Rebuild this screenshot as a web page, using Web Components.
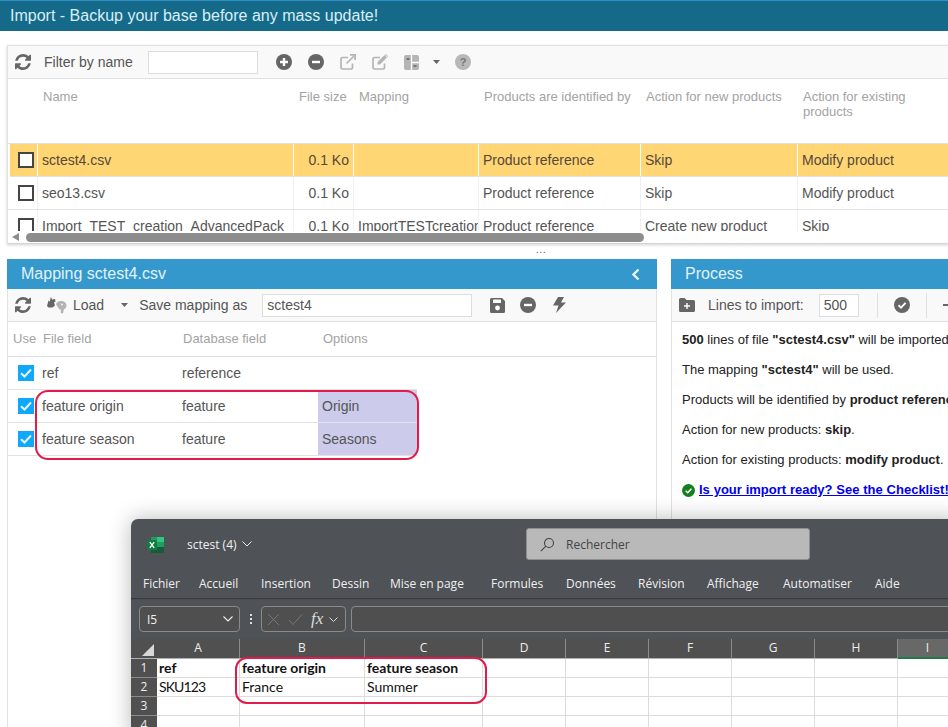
<!DOCTYPE html>
<html lang="en">
<head>
<meta charset="utf-8">
<title>Import</title>
<style>
html, body { margin: 0; padding: 0; }
body {
    width: 948px;
    height: 727px;
    overflow: hidden;
    position: relative;
    background: #fff;
    font-family: "Liberation Sans", Arial, sans-serif;
    font-size: 14px;
}
.bottom { display: flex; gap: 14px; padding-left: 7px; }
</style>
</head>
<body>
<app-titlebar>Import - Backup your base before any mass update!</app-titlebar>
<files-panel></files-panel>
<app-splitter></app-splitter>
<div class="bottom">
    <app-panel heading="Mapping sctest4.csv" width="650" collapsible>
        <mapping-toolbar slot="toolbar"></mapping-toolbar>
        <mapping-table></mapping-table>
    </app-panel>
    <app-panel heading="Process" width="290">
        <process-toolbar slot="toolbar"></process-toolbar>
        <process-summary></process-summary>
    </app-panel>
</div>
<excel-window></excel-window>

<script>
// Shared FontAwesome style icons
const ICONS = {
    refresh: (c, s = 16) => `<svg width="${s}" height="${s}" viewBox="128 128 1536 1536" fill="${c}"><path d="M1639 1056q0 5-1 7-64 268-268 434.5t-478 166.5q-146 0-282.5-55t-243.5-157l-129 129q-19 19-45 19t-45-19-19-45v-448q0-26 19-45t45-19h448q26 0 45 19t19 45-19 45l-137 137q71 66 161 102t187 36q134 0 250-65t186-179q11-17 53-117 8-23 30-23h192q13 0 22.5 9.5t9.5 22.5zm25-800v448q0 26-19 45t-45 19h-448q-26 0-45-19t-19-45 19-45l138-138q-148-137-349-137-134 0-250 65t-186 179q-11 17-53 117-8 23-30 23h-199q-13 0-22.5-9.5t-9.5-22.5v-7q65-268 270-434.5t480-166.5q146 0 284 55.5t245 156.5l130-129q19-19 45-19t45 19 19 45z"/></svg>`,
    plus: (c) => `<svg width="16" height="16" viewBox="0 0 16 16"><circle cx="8" cy="8" r="8" fill="${c}"/><path d="M4 6.800h2.800V4h2.400v2.800H12v2.400H9.200V12H6.800V9.200H4z" fill="#fff"/></svg>`,
    minus: (c) => `<svg width="16" height="16" viewBox="0 0 16 16"><circle cx="8" cy="8" r="8" fill="${c}"/><rect x="4" y="6.800" width="8" height="2.400" fill="#fff"/></svg>`,
    external: (c) => `<svg width="16" height="16" viewBox="0 0 16 16" fill="none" stroke="${c}" stroke-width="1.700"><path d="M12.500 9.500v4a1.500 1.500 0 0 1-1.500 1.500H2.500A1.500 1.500 0 0 1 1 13.500V5a1.500 1.500 0 0 1 1.500-1.500H8"/><path d="M6.500 9.500 15 1"/><path d="M10 .9h5.100V6" /></svg>`,
    edit: (c) => `<svg width="16" height="16" viewBox="0 0 16 16"><path d="M12.500 9.500v4a1.500 1.500 0 0 1-1.500 1.500H2.500A1.500 1.500 0 0 1 1 13.500V5a1.500 1.500 0 0 1 1.500-1.500H8" fill="none" stroke="${c}" stroke-width="1.700"/><path d="M5.500 8 12.500 1l2.500 2.500-7 7H5.500z M13 .5l.8-.5 2.200 2.200-.5.800z" fill="${c}"/></svg>`,
    columns: (c) => `<svg width="15" height="15" viewBox="0 0 15 15"><rect width="15" height="15" rx="2" fill="${c}"/><path d="M7.500 0v15M7.500 7.500h7.500" stroke="#fff" stroke-width="1.300" fill="none"/><rect x="2.500" y="3" width="3" height="2" fill="#777"/><rect x="9.500" y="10" width="3" height="2" fill="#777"/></svg>`,
    caret: (c) => `<svg width="7" height="4" viewBox="0 0 7 4"><path d="M0 0h7L3.500 4z" fill="${c}"/></svg>`,
    save: (c) => `<svg width="15" height="15" viewBox="0 0 15 15"><path d="M1.500 0H12l3 3v10.500a1.500 1.500 0 0 1-1.500 1.500h-12A1.500 1.500 0 0 1 0 13.500v-12A1.500 1.500 0 0 1 1.500 0z" fill="${c}"/><rect x="3" y="1.500" width="8" height="3.500" rx=".5" fill="#fff"/><circle cx="7.500" cy="10" r="2.400" fill="#fff"/></svg>`,
    bolt: (c) => `<svg width="13" height="16" viewBox="0 0 13 16"><path d="M5 0h6L8 5.500h5L3 16l2.500-7.500H0z" fill="${c}"/></svg>`,
    folderPlus: (c) => `<svg width="16" height="14" viewBox="0 0 16 14"><path d="M1.500 0h4L7.500 2H14.500A1.500 1.500 0 0 1 16 3.500v9a1.500 1.500 0 0 1-1.500 1.500h-13A1.500 1.500 0 0 1 0 12.500v-11A1.500 1.500 0 0 1 1.500 0z" fill="${c}"/><path d="M5 7.300h2.300V5h1.400v2.300H11v1.400H8.700V11H7.300V8.700H5z" fill="#fff"/></svg>`,
    checkCircle: (c, s = 16) => `<svg width="${s}" height="${s}" viewBox="0 0 16 16"><circle cx="8" cy="8" r="8" fill="${c}"/><path d="M4.500 8.300 7 10.700l4.600-4.900" fill="none" stroke="#fff" stroke-width="1.900"/></svg>`,
    // hand and little elephant next to "Load"
    elephant: () => `<svg width="20" height="17" viewBox="0 0 20 17"><path d="M0 9 1.500 3.500 2.800 4.800 3.800 0 5.500 2.800 8 1.800 8.500 4.500 7 5.500 8 8.500 5.500 10.500H1.500z" fill="#666"/><path d="M9 7c.8-2 2.500-3 5-3 3 0 5.500 1.600 5.500 4.500 0 2.200-1.200 3.200-2.500 3.800-.5 1-.5 2.500-1 3.700-.7.500-1.600.500-2.200 0V12.500c-1.200 0-2-.5-2.300-1.500C10.500 9.500 9.500 8.500 9 7z" fill="#b4b4b4"/><circle cx="15" cy="7.500" r="1" fill="#f4f4f4"/></svg>`
};

// Dark blue strip at the very top of the page
class AppTitlebar extends HTMLElement {
    constructor() {
        super();
        this.attachShadow({ mode: 'open' });
    }
    connectedCallback() {
        this.shadowRoot.innerHTML = `
            <style>
                :host { display: block; border-top: 1px solid #2e8fc9; }
                .bar {
                    height: 30px;
                    line-height: 29px;
                    background: #156a8a;
                    color: #d9eef6;
                    font-size: 16px;
                    padding-left: 10px;
                }
            </style>
            <div class="bar"><slot></slot></div>
        `;
    }
}

class FilesPanel extends HTMLElement {
    constructor() {
        super();
        this.attachShadow({ mode: 'open' });
    }
    row(name, size, mapping, id, fresh, existing, selected) {
        return `
            <div class="row${selected ? ' selected' : ''}">
                <div class="cell c0"><span class="box"></span></div>
                <div class="cell c1">${name}</div>
                <div class="cell c2">${size}</div>
                <div class="cell c3">${mapping}</div>
                <div class="cell c4">${id}</div>
                <div class="cell c5">${fresh}</div>
                <div class="cell c6">${existing}</div>
            </div>`;
    }
    connectedCallback() {
        this.shadowRoot.innerHTML = `
            <style>
                :host {
                    display: block;
                    margin: 14px 0 0 7px;
                    width: 960px;
                    border: 1px solid #e2e2e2;
                    border-bottom-color: #d4d4d4;
                    box-shadow: 0 1px 3px rgba(0,0,0,.18);
                    background: #fff;
                    box-sizing: border-box;
                }
                .toolbar {
                    height: 32px;
                    background: #f9f9f9;
                    border-bottom: 1px solid #e0e0e0;
                    display: flex;
                    align-items: center;
                    padding-left: 7px;
                    color: #555;
                    font-size: 14px;
                }
                .toolbar > * { flex: none; }
                input {
                    box-sizing: border-box;
                    width: 110px;
                    height: 23px;
                    border: 1px solid #ddd;
                    background: #fff;
                    margin: 0 18px 0 15px;
                    padding: 0;
                }
                .gap { margin-left: 16px; display: flex; }
                .head {
                    height: 65px;
                    display: flex;
                    color: #a3a3a3;
                    font-size: 13px;
                    line-height: 15px;
                    border-bottom: 1px solid #e0e0e0;
                    padding-top: 10px;
                    box-sizing: border-box;
                }
                .head div { box-sizing: border-box; padding-left: 5px; flex: none; }
                .viewport { height: 87px; overflow: hidden; }
                .row {
                    height: 33px;
                    box-sizing: border-box;
                    display: flex;
                    padding-left: 2px;
                    border-bottom: 1px solid #e2e2e2;
                    color: #555;
                    font-size: 14px;
                    line-height: 32px;
                }
                .cell {
                    flex: none;
                    box-sizing: border-box;
                    padding-left: 4px;
                    border-right: 1px solid #f0f0f0;
                    overflow: hidden;
                    white-space: nowrap;
                }
                .row.selected { background: #ffd673; color: #54483a; padding-left: 0; margin-left: 2px; }
                .row.selected .cell { border-right-color: #fff; }
                .c0 { width: 28px; padding: 8px 0 0 8px; line-height: 0; }
                .c1 { width: 256px; }
                .c2 { width: 60px; text-align: right; padding-right: 4px; }
                .c3 { width: 125px; }
                .c4 { width: 162px; }
                .c5 { width: 157px; }
                .c6 { width: 160px; border-right: 0; }
                .box {
                    display: block;
                    width: 16px;
                    height: 16px;
                    box-sizing: border-box;
                    border: 2px solid #444;
                    background: #fff;
                }
                .scroll {
                    height: 12px;
                    position: relative;
                    background: #fff;
                    display: flex;
                    align-items: center;
                }
                .arrow {
                    margin-left: 4px;
                    width: 0;
                    height: 0;
                    border-top: 4px solid transparent;
                    border-bottom: 4px solid transparent;
                    border-right: 7px solid #8d8d8d;
                }
                .thumb {
                    margin-left: 7px;
                    width: 618px;
                    height: 9px;
                    border-radius: 5px;
                    background: #8d8d8d;
                }
            </style>
            <div class="toolbar">
                ${ICONS.refresh('#666')}
                <span style="margin-left:13px">Filter by name</span>
                <input type="text">
                <span class="gap" style="margin-left:0">${ICONS.plus('#666')}</span>
                <span class="gap">${ICONS.minus('#666')}</span>
                <span class="gap">${ICONS.external('#b5b5b5')}</span>
                <span class="gap">${ICONS.edit('#b5b5b5')}</span>
                <span class="gap">${ICONS.columns('#b5b5b5')}</span>
                <span class="gap" style="margin-left:14px">${ICONS.caret('#666')}</span>
                <span class="gap" style="margin-left:15px">
                    <svg width="16" height="16" viewBox="0 0 16 16"><circle cx="8" cy="8" r="8" fill="#b8b8b8"/><text x="8" y="12" text-anchor="middle" font-size="11" font-weight="700" fill="#777" font-family="Liberation Sans">?</text></svg>
                </span>
            </div>
            <div class="head">
                <div style="width:286px;padding-left:35px">Name</div>
                <div style="width:60px">File size</div>
                <div style="width:125px">Mapping</div>
                <div style="width:162px">Products are identified by</div>
                <div style="width:157px">Action for new products</div>
                <div style="width:125px">Action for existing products</div>
            </div>
            <div class="viewport">
                ${this.row('sctest4.csv', '0.1 Ko', '', 'Product reference', 'Skip', 'Modify product', true)}
                ${this.row('seo13.csv', '0.1 Ko', '', 'Product reference', 'Skip', 'Modify product')}
                ${this.row('Import_TEST_creation_AdvancedPack', '0.1 Ko', 'ImportTESTcreation', 'Product reference', 'Create new product', 'Skip')}
            </div>
            <div class="scroll"><span class="arrow"></span><span class="thumb"></span></div>
        `;
    }
}

class AppSplitter extends HTMLElement {
    constructor() {
        super();
        this.attachShadow({ mode: 'open' });
    }
    connectedCallback() {
        this.shadowRoot.innerHTML = `
            <style>
                :host {
                    display: block;
                    height: 15px;
                    text-align: center;
                    color: #666;
                    font-size: 11px;
                    line-height: 10px;
                    letter-spacing: .5px;
                    padding-left: 134px;
                    box-sizing: border-box;
                    width: 948px;
                }
            </style>
            ...
        `;
    }
}

// Blue headed panel, toolbar and content come in through slots
class AppPanel extends HTMLElement {
    constructor() {
        super();
        this.attachShadow({ mode: 'open' });
    }
    connectedCallback() {
        const chevron = this.hasAttribute('collapsible')
            ? `<svg class="chev" width="9" height="13" viewBox="0 0 9 13"><path d="M7.500 1.500 2.500 6.500l5 5" fill="none" stroke="#eaf5fb" stroke-width="2.400"/></svg>`
            : '';
        this.shadowRoot.innerHTML = `
            <style>
                :host {
                    display: block;
                    flex: none;
                    width: ${this.getAttribute('width')}px;
                    height: 468px;
                    box-sizing: border-box;
                    border-left: 1px solid #e2e2e2;
                    border-right: 1px solid #e2e2e2;
                    background: #fff;
                }
                .head {
                    height: 30px;
                    margin: 0 -1px;
                    background: #3498cc;
                    color: #e2f2fa;
                    font-size: 16px;
                    line-height: 29px;
                    padding: 0 17px 0 14px;
                    display: flex;
                    justify-content: space-between;
                    align-items: center;
                }
                .head span { display: block; height: 30px; }
                .chev { flex: none; }
                .tools { display: block; }
            </style>
            <div class="head"><span>${this.getAttribute('heading')}</span>${chevron}</div>
            <div class="tools"><slot name="toolbar"></slot></div>
            <slot></slot>
        `;
    }
}

class MappingToolbar extends HTMLElement {
    constructor() {
        super();
        this.attachShadow({ mode: 'open' });
    }
    connectedCallback() {
        this.shadowRoot.innerHTML = `
            <style>
                :host {
                    display: flex;
                    height: 33px;
                    box-sizing: border-box;
                    align-items: center;
                    background: #f9f9f9;
                    border-bottom: 1px solid #e0e0e0;
                    padding-left: 7px;
                    color: #555;
                    font-size: 14px;
                }
                span { flex: none; display: flex; }
                input {
                    box-sizing: border-box;
                    flex: none;
                    width: 210px;
                    height: 23px;
                    border: 1px solid #ddd;
                    background: #fff;
                    font: 14px "Liberation Sans", Arial, sans-serif;
                    color: #555;
                    padding: 0 4px;
                    margin: 0 18px 0 15px;
                }
            </style>
            ${ICONS.refresh('#666')}
            <span style="margin-left:16px">${ICONS.elephant()}</span>
            <span style="margin-left:6px">Load</span>
            <span style="margin-left:17px">${ICONS.caret('#666')}</span>
            <span style="margin-left:11px">Save mapping as</span>
            <input type="text" value="sctest4">
            <span>${ICONS.save('#666')}</span>
            <span style="margin-left:15px">${ICONS.minus('#666')}</span>
            <span style="margin-left:17px">${ICONS.bolt('#666')}</span>
        `;
    }
}

class MappingTable extends HTMLElement {
    constructor() {
        super();
        this.attachShadow({ mode: 'open' });
    }
    row(field, db, option) {
        return `
            <div class="row">
                <span class="check"><svg width="16" height="16" viewBox="0 0 16 16"><rect width="16" height="16" fill="#0fa8fb"/><path d="M3 8.300 6.500 11.500 13 4.500" fill="none" stroke="#e6f6ff" stroke-width="2"/></svg></span>
                <span class="f">${field}</span>
                <span class="d">${db}</span>
                <span class="o${option ? ' filled' : ''}">${option}</span>
            </div>`;
    }
    connectedCallback() {
        this.shadowRoot.innerHTML = `
            <style>
                :host { display: block; position: relative; }
                .head {
                    height: 35px;
                    box-sizing: border-box;
                    border-bottom: 1px solid #e0e0e0;
                    display: flex;
                    color: #a3a3a3;
                    font-size: 13px;
                    line-height: 34px;
                    padding-left: 5px;
                }
                .head span { flex: none; }
                .row {
                    width: 409px;
                    height: 33px;
                    box-sizing: border-box;
                    border-bottom: 1px solid #e2e2e2;
                    display: flex;
                    color: #555;
                    font-size: 14px;
                    line-height: 32px;
                }
                .check { flex: none; width: 34px; padding: 8px 0 0 10px; box-sizing: border-box; line-height: 0; }
                .f { flex: none; width: 140px; }
                .d { flex: none; width: 136px; }
                .o { flex: none; width: 99px; padding-left: 4px; box-sizing: border-box; }
                .o.filled { background: #cccbec; }
                .ring {
                    position: absolute;
                    left: 27px;
                    top: 68px;
                    width: 384px;
                    height: 70px;
                    box-sizing: border-box;
                    border: 2px solid #df1c4b;
                    border-radius: 13px;
                }
            </style>
            <div class="head">
                <span style="width:30px">Use</span>
                <span style="width:140px">File field</span>
                <span style="width:140px">Database field</span>
                <span>Options</span>
            </div>
            ${this.row('ref', 'reference', '')}
            ${this.row('feature origin', 'feature', 'Origin')}
            ${this.row('feature season', 'feature', 'Seasons')}
            <div class="ring"></div>
        `;
    }
}

class ProcessToolbar extends HTMLElement {
    constructor() {
        super();
        this.attachShadow({ mode: 'open' });
    }
    connectedCallback() {
        this.shadowRoot.innerHTML = `
            <style>
                :host {
                    display: flex;
                    height: 33px;
                    box-sizing: border-box;
                    align-items: center;
                    background: #f9f9f9;
                    border-bottom: 1px solid #e0e0e0;
                    padding-left: 7px;
                    color: #555;
                    font-size: 14px;
                }
                span { flex: none; display: flex; }
                input {
                    box-sizing: border-box;
                    flex: none;
                    width: 40px;
                    height: 23px;
                    border: 1px solid #ddd;
                    background: #fff;
                    font: 14px "Liberation Sans", Arial, sans-serif;
                    color: #555;
                    padding: 0 4px;
                    margin-left: 15px;
                }
                .sep { width: 1px; height: 25px; background: #e0e0e0; }
            </style>
            <span>${ICONS.folderPlus('#666')}</span>
            <span style="margin-left:13px">Lines to import:</span>
            <input type="text" value="500">
            <span class="sep" style="margin-left:18px"></span>
            <span style="margin-left:16px">${ICONS.checkCircle('#666')}</span>
            <span class="sep" style="margin-left:16px"></span>
            <span style="margin-left:16px;width:8px;height:2px;background:#666"></span>
        `;
    }
}

class ProcessSummary extends HTMLElement {
    constructor() {
        super();
        this.attachShadow({ mode: 'open' });
    }
    connectedCallback() {
        this.shadowRoot.innerHTML = `
            <style>
                :host {
                    display: block;
                    padding: 10px 0 0 10px;
                    color: #222;
                    font-size: 13px;
                    line-height: 16px;
                    white-space: nowrap;
                    overflow: hidden;
                }
                p { margin: 0 0 14px; }
                a { color: #0000ee; font-weight: 700; word-spacing: .2px; }
                .ok { display: flex; align-items: center; gap: 4px; }
            </style>
            <p><b>500</b> lines of file <b>"sctest4.csv"</b> will be imported.</p>
            <p>The mapping <b>"sctest4"</b> will be used.</p>
            <p>Products will be identified by <b>product reference</b>.</p>
            <p>Action for new products: <b>skip</b>.</p>
            <p>Action for existing products: <b>modify product</b>.</p>
            <p class="ok">${ICONS.checkCircle('#157f1f', 13)}<a href="#">Is your import ready? See the Checklist!</a></p>
        `;
    }
}

// Excel window lying over the page, cropped by the screenshot
class ExcelWindow extends HTMLElement {
    constructor() {
        super();
        this.attachShadow({ mode: 'open' });
    }
    connectedCallback() {
        const menu = [['Fichier', 56], ['Accueil', 62], ['Insertion', 71], ['Dessin', 58], ['Mise en page', 101], ['Formules', 75], ['Données', 72], ['Révision', 69], ['Affichage', 76], ['Automatiser', 92], ['Aide', 40]];
        const cols = [['A', 83], ['B', 125], ['C', 118], ['D', 83], ['E', 83], ['F', 83], ['G', 83], ['H', 83], ['I', 60]];
        const rows = [
            ['ref', 'feature origin', 'feature season'],
            ['<span style="letter-spacing:-.9px">SKU123</span>', 'France', 'Summer'],
            [], []
        ];
        const tpl = cols.map(c => c[1] + 'px').join(' ');
        const cell = (t, bold) => `<div class="cell${bold ? ' bold' : ''}">${t || ''}</div>`;
        this.shadowRoot.innerHTML = `
            <style>
                :host {
                    position: absolute;
                    left: 131px;
                    top: 519px;
                    width: 830px;
                    height: 220px;
                    display: block;
                    background: #4f5256;
                    border-radius: 7px 0 0 0;
                    box-shadow: 0 0 22px rgba(0,0,0,.28);
                    font-family: "Open Sans", "Noto Sans", sans-serif;
                    color: #f0f0f0;
                }
                .clip { overflow: hidden; height: 100%; border-radius: 7px 0 0 0; position: relative; }
                .title {
                    height: 46px;
                    box-sizing: border-box;
                    display: flex;
                    align-items: center;
                    padding: 4px 0 0 16px;
                    font-size: 12px;
                    position: relative;
                }
                .title .name { margin-left: 23px; display: flex; align-items: center; gap: 5px; }
                .search {
                    position: absolute;
                    left: 395px;
                    top: 9px;
                    width: 284px;
                    height: 32px;
                    box-sizing: border-box;
                    background: #b9b9b9;
                    border: 1px solid #8f8f8f;
                    border-radius: 3px;
                    color: #444;
                    display: flex;
                    align-items: center;
                    padding-left: 13px;
                    gap: 11px;
                    font-size: 12px;
                }
                .menu {
                    height: 33px;
                    box-sizing: border-box;
                    display: flex;
                    padding: 10px 0 0 12px;
                    font-size: 12px;
                    line-height: 18px;
                    box-shadow: 0 1px 1px rgba(0,0,0,.3);
                }
                .menu span { flex: none; }
                .formula {
                    height: 41px;
                    box-sizing: border-box;
                    padding: 8px 0 0 8px;
                    display: flex;
                }
                .fbox {
                    box-sizing: border-box;
                    height: 26px;
                    background: #4f4f4f;
                    border: 1px solid #8a8a8a;
                    border-radius: 4px;
                    display: flex;
                    align-items: center;
                    flex: none;
                }
                .namebox { width: 101px; padding: 0 6px 0 7px; justify-content: space-between; font-size: 12px; }
                .dots { width: 21px; flex: none; display: flex; flex-direction: column; gap: 2px; align-items: center; justify-content: center; height: 26px; }
                .dots i { width: 2px; height: 2px; background: #e0e0e0; display: block; }
                .fx { width: 85px; padding-left: 5px; gap: 8px; color: #ddd; }
                .fx b { font: italic 400 17px "Liberation Serif", serif; line-height: 20px; margin-right: -5px; }
                .input { width: 640px; margin-left: 5px; }
                .colhead {
                    display: grid;
                    grid-template-columns: 26px ${tpl};
                    height: 19px;
                    background: #505050;
                    font-size: 12px;
                    line-height: 18px;
                    text-align: center;
                    color: #eee;
                    border-bottom: 1px solid #b0b0b0;
                }
                .colhead div { border-right: 1px solid #8b8b8b; box-sizing: border-box; height: 19px; }
                .colhead .corner { position: relative; border-right: 0; }
                .colhead .corner:after {
                    content: '';
                    position: absolute;
                    right: 3px;
                    bottom: 2px;
                    border-left: 12px solid transparent;
                    border-bottom: 12px solid #d8d8d8;
                }
                .colhead .active { background: #686868; border-bottom: 2px solid #1d7a46; height: 20px; }
                .sheet { display: grid; grid-template-columns: 26px ${tpl}; background: #fff; grid-auto-rows: 19px; }
                .rowhead {
                    background: #505050;
                    color: #eee;
                    font-size: 12px;
                    line-height: 18px;
                    text-align: center;
                    border-bottom: 1px solid #8b8b8b;
                    box-sizing: border-box;
                }
                .cell {
                    box-sizing: border-box;
                    border-right: 1px solid #dcdcdc;
                    border-bottom: 1px solid #dcdcdc;
                    color: #111;
                    font-family: Lato, "Noto Sans", sans-serif;
                    font-size: 14px;
                    line-height: 18px;
                    padding-left: 2px;
                    white-space: nowrap;
                    overflow: hidden;
                }
                .cell.bold { font-weight: 700; }
                .ring {
                    position: absolute;
                    left: 104px;
                    top: 138px;
                    width: 252px;
                    height: 47px;
                    box-sizing: border-box;
                    border: 2px solid #df1c4b;
                    border-radius: 12px;
                }
            </style>
            <div class="clip">
            <div class="title">
                <svg width="17" height="17" viewBox="0 0 17 17">
                    <rect x="4" y="1" width="13" height="16" rx="1" fill="#1f9e63"/>
                    <rect x="10" y="1" width="7" height="5" fill="#33c481"/>
                    <rect x="4" y="11" width="13" height="6" fill="#185c37"/>
                    <rect x="0" y="4" width="10" height="10" rx="1" fill="#107c41"/>
                    <path d="M2.800 6.200 7.200 11.800M7.200 6.200 2.800 11.800" stroke="#fff" stroke-width="1.300"/>
                </svg>
                <span class="name">sctest (4)
                    <svg width="10" height="6" viewBox="0 0 10 6"><path d="M.5.5 5 5 9.500.5" fill="none" stroke="#eee" stroke-width="1"/></svg>
                </span>
                <div class="search">
                    <svg width="15" height="15" viewBox="0 0 15 15" fill="none" stroke="#444" stroke-width="1.100"><circle cx="9" cy="6" r="4.500"/><path d="M5.800 9.200.8 14.200"/></svg>
                    <span>Rechercher</span>
                </div>
            </div>
            <div class="menu">${menu.map(m => `<span style="width:${m[1]}px">${m[0]}</span>`).join('')}</div>
            <div class="formula">
                <div class="fbox namebox"><span>I5</span>
                    <svg width="10" height="6" viewBox="0 0 10 6"><path d="M.5.5 5 5 9.500.5" fill="none" stroke="#eee" stroke-width="1.100"/></svg>
                </div>
                <div class="dots"><i></i><i></i><i></i></div>
                <div class="fbox fx">
                    <svg width="13" height="13" viewBox="0 0 13 13"><path d="M1 1 12 12M12 1 1 12" stroke="#777" stroke-width="1"/></svg>
                    <svg width="15" height="13" viewBox="0 0 15 13"><path d="M1 7 5 11.500 14 1.500" fill="none" stroke="#777" stroke-width="1"/></svg>
                    <b>fx</b>
                    <svg style="margin-left:3px" width="9" height="5" viewBox="0 0 9 5"><path d="M.5.5 4.500 4.500 8.500.5" fill="none" stroke="#ddd" stroke-width="1"/></svg>
                </div>
                <div class="fbox input"></div>
            </div>
            <div class="colhead">
                <div class="corner"></div>
                ${cols.map(c => `<div class="${c[0] === 'I' ? 'active' : ''}">${c[0]}</div>`).join('')}
            </div>
            <div class="sheet">
                ${rows.map((r, i) => `
                    <div class="rowhead">${i + 1}</div>
                    ${cols.map((c, j) => cell(r[j], i === 0)).join('')}
                `).join('')}
            </div>
            <div class="ring"></div>
            </div>
        `;
    }
}

customElements.define('app-titlebar', AppTitlebar);
customElements.define('files-panel', FilesPanel);
customElements.define('app-splitter', AppSplitter);
customElements.define('app-panel', AppPanel);
customElements.define('mapping-toolbar', MappingToolbar);
customElements.define('mapping-table', MappingTable);
customElements.define('process-toolbar', ProcessToolbar);
customElements.define('process-summary', ProcessSummary);
customElements.define('excel-window', ExcelWindow);
</script>
</body>
</html>
